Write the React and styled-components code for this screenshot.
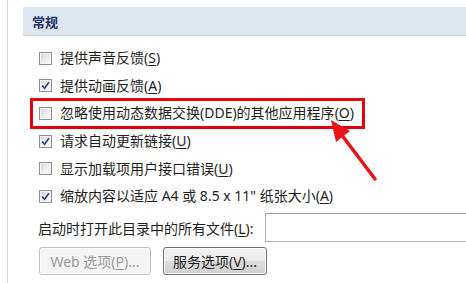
import React from 'react';
import styled, { createGlobalStyle } from 'styled-components';

const GlobalStyle = createGlobalStyle`
  html, body {
    margin: 0;
    padding: 0;
    background: #fff;
  }
  body {
    font-family: "Noto Sans", "Noto Sans CJK SC", sans-serif;
    font-size: 14px;
    color: #1e1e1e;
  }
`;

const Page = styled.div`
  position: relative;
  width: 466px;
  height: 283px;
  overflow: hidden;
  padding-left: 7px;
  box-sizing: border-box;
`;

const Panel = styled.div`
  height: 100%;
  border-left: 1px solid #d6d9dc;
  padding: 7px 0 0 15px;
  box-sizing: border-box;
`;

const SectionHeader = styled.div`
  height: 28px;
  display: flex;
  align-items: center;
  padding-left: 9px;
  background: #dee7ef;
  border-bottom: 1px solid #c8d1da;
  font-family: "Noto Sans CJK SC", sans-serif;
  font-weight: 700;
  font-size: 13px;
  color: #1f3265;
`;

const Options = styled.div`
  display: flex;
  flex-direction: column;
  padding: 8.5px 0 0 16px;
`;

const Row = styled.div`
  position: relative;
  height: 27.6px;
  display: flex;
  align-items: center;
  gap: 8px;
  white-space: nowrap;
  line-height: 1;
`;

const Box = styled.span`
  width: 13px;
  height: 13px;
  box-sizing: border-box;
  border: 1px solid #8e8f8f;
  background: linear-gradient(135deg, #d4d4d4 0%, #eeeeee 55%, #fbfbfb 100%);
  box-shadow: inset 0 0 0 1px #f4f4f4;
  display: flex;
  align-items: center;
  justify-content: center;
  flex-shrink: 0;
`;

const Key = styled.span`
  text-decoration: underline;
  text-underline-offset: 2px;
`;

const Highlight = styled.div`
  position: absolute;
  left: -9px;
  top: calc(50% - 15.5px);
  width: 335px;
  height: 31px;
  box-sizing: border-box;
  border: 3px solid #e3000f;
  pointer-events: none;
`;

const FileRow = styled.div`
  display: flex;
  align-items: center;
  gap: 11px;
  height: 29px;
  margin-top: 3px;
  padding-left: 15px;
  white-space: nowrap;
`;

const PathInput = styled.div`
  width: 260px;
  height: 29px;
  box-sizing: border-box;
  border: 1px solid #abadb3;
  border-top-color: #9a9ca3;
  background: #fff;
  flex-shrink: 0;
`;

const ButtonRow = styled.div`
  display: flex;
  gap: 12px;
  margin-top: 5px;
  padding-left: 16px;
`;

const Button = styled.div`
  width: ${p => p.$w}px;
  height: 28px;
  box-sizing: border-box;
  border-radius: 3px;
  display: flex;
  align-items: center;
  justify-content: center;
  white-space: nowrap;
  border: 1px solid ${p => (p.$disabled ? '#bfc2c4' : '#707070')};
  color: ${p => (p.$disabled ? '#9a9a9a' : '#1e1e1e')};
  background: ${p =>
    p.$disabled
      ? '#f4f4f4'
      : 'linear-gradient(#f2f2f2 0%, #ebebeb 50%, #dddddd 51%, #cfcfcf 100%)'};
  box-shadow: inset 0 0 0 1px ${p => (p.$disabled ? '#f9f9f9' : '#fcfcfc')};
`;

const Arrow = styled.svg`
  position: absolute;
  left: 0;
  top: 0;
  pointer-events: none;
`;

const CheckMark = () => (
  <svg width="9" height="9" viewBox="0 0 9 9">
    <path d="M1.2 4.6 L3.6 7.3 L7.9 1.2" fill="none" stroke="#2a3f7e" strokeWidth="1.6" />
  </svg>
);

const Option = ({ checked, children, keyChar, highlight }) => (
  <Row>
    <Box>{checked && <CheckMark />}</Box>
    <span>
      {children}(<Key>{keyChar}</Key>)
    </span>
    {highlight && <Highlight />}
  </Row>
);

const options = [
  { label: '提供声音反馈', key: 'S', checked: false },
  { label: '提供动画反馈', key: 'A', checked: true },
  { label: '忽略使用动态数据交换(DDE)的其他应用程序', key: 'O', checked: false, highlight: true },
  { label: '请求自动更新链接', key: 'U', checked: true },
  { label: '显示加载项用户接口错误', key: 'U', checked: false },
  { label: '缩放内容以适应 A4 或 8.5 x 11" 纸张大小', key: 'A', checked: true },
];

export default function App() {
  return (
    <>
      <GlobalStyle />
      <Page>
        <Panel>
          <SectionHeader>常规</SectionHeader>
          <Options>
            {options.map((o, i) => (
              <Option key={i} checked={o.checked} keyChar={o.key} highlight={o.highlight}>
                {o.label}
              </Option>
            ))}
          </Options>
          <FileRow>
            <span>
              启动时打开此目录中的所有文件(<Key>L</Key>):
            </span>
            <PathInput />
          </FileRow>
          <ButtonRow>
            <Button $w={112} $disabled>
              Web 选项(<Key>P</Key>)...
            </Button>
            <Button $w={104}>
              服务选项(<Key>V</Key>)...
            </Button>
          </ButtonRow>
        </Panel>
        <Arrow width="466" height="283" viewBox="0 0 466 283">
          <line x1="375" y1="179" x2="341" y2="134" stroke="#e8141b" strokeWidth="3.5" strokeLinecap="round" />
          <polygon points="331,120 350,131 336,142" fill="#e8141b" />
        </Arrow>
      </Page>
    </>
  );
}
